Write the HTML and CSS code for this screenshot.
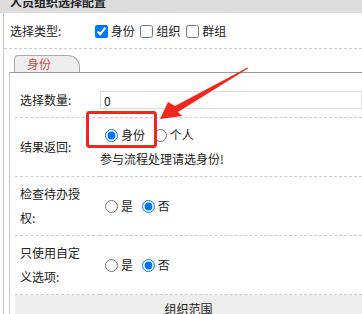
FILE: index.html
```html
<!DOCTYPE html>
<html lang="zh-CN">
<head>
  <meta charset="UTF-8">
  <title>人员组织选择配置</title>
  <link rel="stylesheet" href="styles.css">
</head>
<body>
  <div class="panel-title">人员组织选择配置</div>
  <div class="panel-body">
    <div class="type-row">
      <span class="type-label">选择类型:</span>
      <label class="opt"><input type="checkbox" checked>身份</label>
      <label class="opt"><input type="checkbox">组织</label>
      <label class="opt"><input type="checkbox">群组</label>
    </div>

    <div class="tabs">
      <span class="tab active">身份</span>
    </div>

    <div class="tab-content">
      <table class="form-table">
        <tr>
          <td class="label">选择数量:</td>
          <td class="value"><input type="text" class="num-input" value="0"></td>
        </tr>
        <tr>
          <td class="label">结果返回:</td>
          <td class="value">
            <div>
              <label class="opt"><input type="radio" name="ret" checked>身份</label>
              <label class="opt"><input type="radio" name="ret">个人</label>
            </div>
            <div class="hint">参与流程处理请选身份!</div>
          </td>
        </tr>
        <tr>
          <td class="label">检查待办授权:</td>
          <td class="value">
            <label class="opt"><input type="radio" name="todo">是</label>
            <label class="opt"><input type="radio" name="todo" checked>否</label>
          </td>
        </tr>
        <tr>
          <td class="label">只使用自定义选项:</td>
          <td class="value">
            <label class="opt"><input type="radio" name="custom">是</label>
            <label class="opt"><input type="radio" name="custom" checked>否</label>
          </td>
        </tr>
        <tr>
          <th colspan="2" class="section">组织范围</th>
        </tr>
      </table>
    </div>
  </div>

  <!-- 截图标注 -->
  <svg class="annotation" width="362" height="314" viewBox="0 0 362 314">
    <rect x="87.5" y="112.5" width="68" height="34" rx="2" fill="none" stroke="#f0271c" stroke-width="3"/>
    <polygon points="160,119 168,102 175,106 247.5,67.5 248,68.5 178,112 182,116" fill="#f0271c"/>
  </svg>
</body>
</html>
```

FILE: styles.css
```css
html, body {
  overflow: hidden;
}

body {
  margin: 0;
  font-family: "Noto Sans CJK SC", "Noto Sans", sans-serif;
  font-size: 12px;
  color: #222;
  background: #fff;
  position: relative;
}

.panel-title {
  margin-top: -10px;
  height: 23px;
  line-height: 23px;
  padding-left: 10px;
  background-color: #ddd;
  font-weight: bold;
}

.panel-body {
  margin-left: 3px;
  border-left: 1px solid #ccc;
}

.type-row {
  height: 35px;
  line-height: 35px;
  padding-left: 6px;
  border-bottom: 1px dashed #ccc;
}

.type-label {
  display: inline-block;
  width: 79px;
}

.opt {
  margin-right: 1px;
}

.opt input {
  vertical-align: -2px;
}

.type-row .opt {
  margin-right: 0;
}

.type-row .opt input {
  margin: 0 3px 0 3px;
}

.tabs {
  display: flex;
  padding: 6px 0 0 10px;
}

.tab {
  line-height: 16px;
  padding: 0 28px 0 12px;
  border: 1px solid #aaa;
  border-bottom: none;
  border-radius: 4px 12px 0 0;
  background-color: #eee;
}

.tab.active {
  color: #c8504a;
}

.tab-content {
  margin-left: 5px;
  border-top: 1px solid #999;
  border-left: 1px solid #ccc;
  padding: 10px 0 0 5px;
}

.form-table {
  width: 100%;
  border-collapse: collapse;
}

.form-table td {
  padding: 5px 0;
  line-height: 24px;
  border-bottom: 1px dashed #ccc;
  vertical-align: middle;
}

.form-table td.label {
  width: 70px;
  padding: 5px 10px 5px 5px;
}

.num-input {
  display: block;
  box-sizing: border-box;
  width: 100%;
  height: 18px;
  padding: 0 3px;
  border: 1px solid #ddd;
  font-family: inherit;
  font-size: 12px;
  color: #222;
  outline: none;
}

.form-table .section {
  background-color: #eee;
  padding-top: 2px;
  line-height: 24px;
  font-weight: normal;
  text-align: center;
}

.annotation {
  position: absolute;
  left: 0;
  top: 0;
  pointer-events: none;
}
```
